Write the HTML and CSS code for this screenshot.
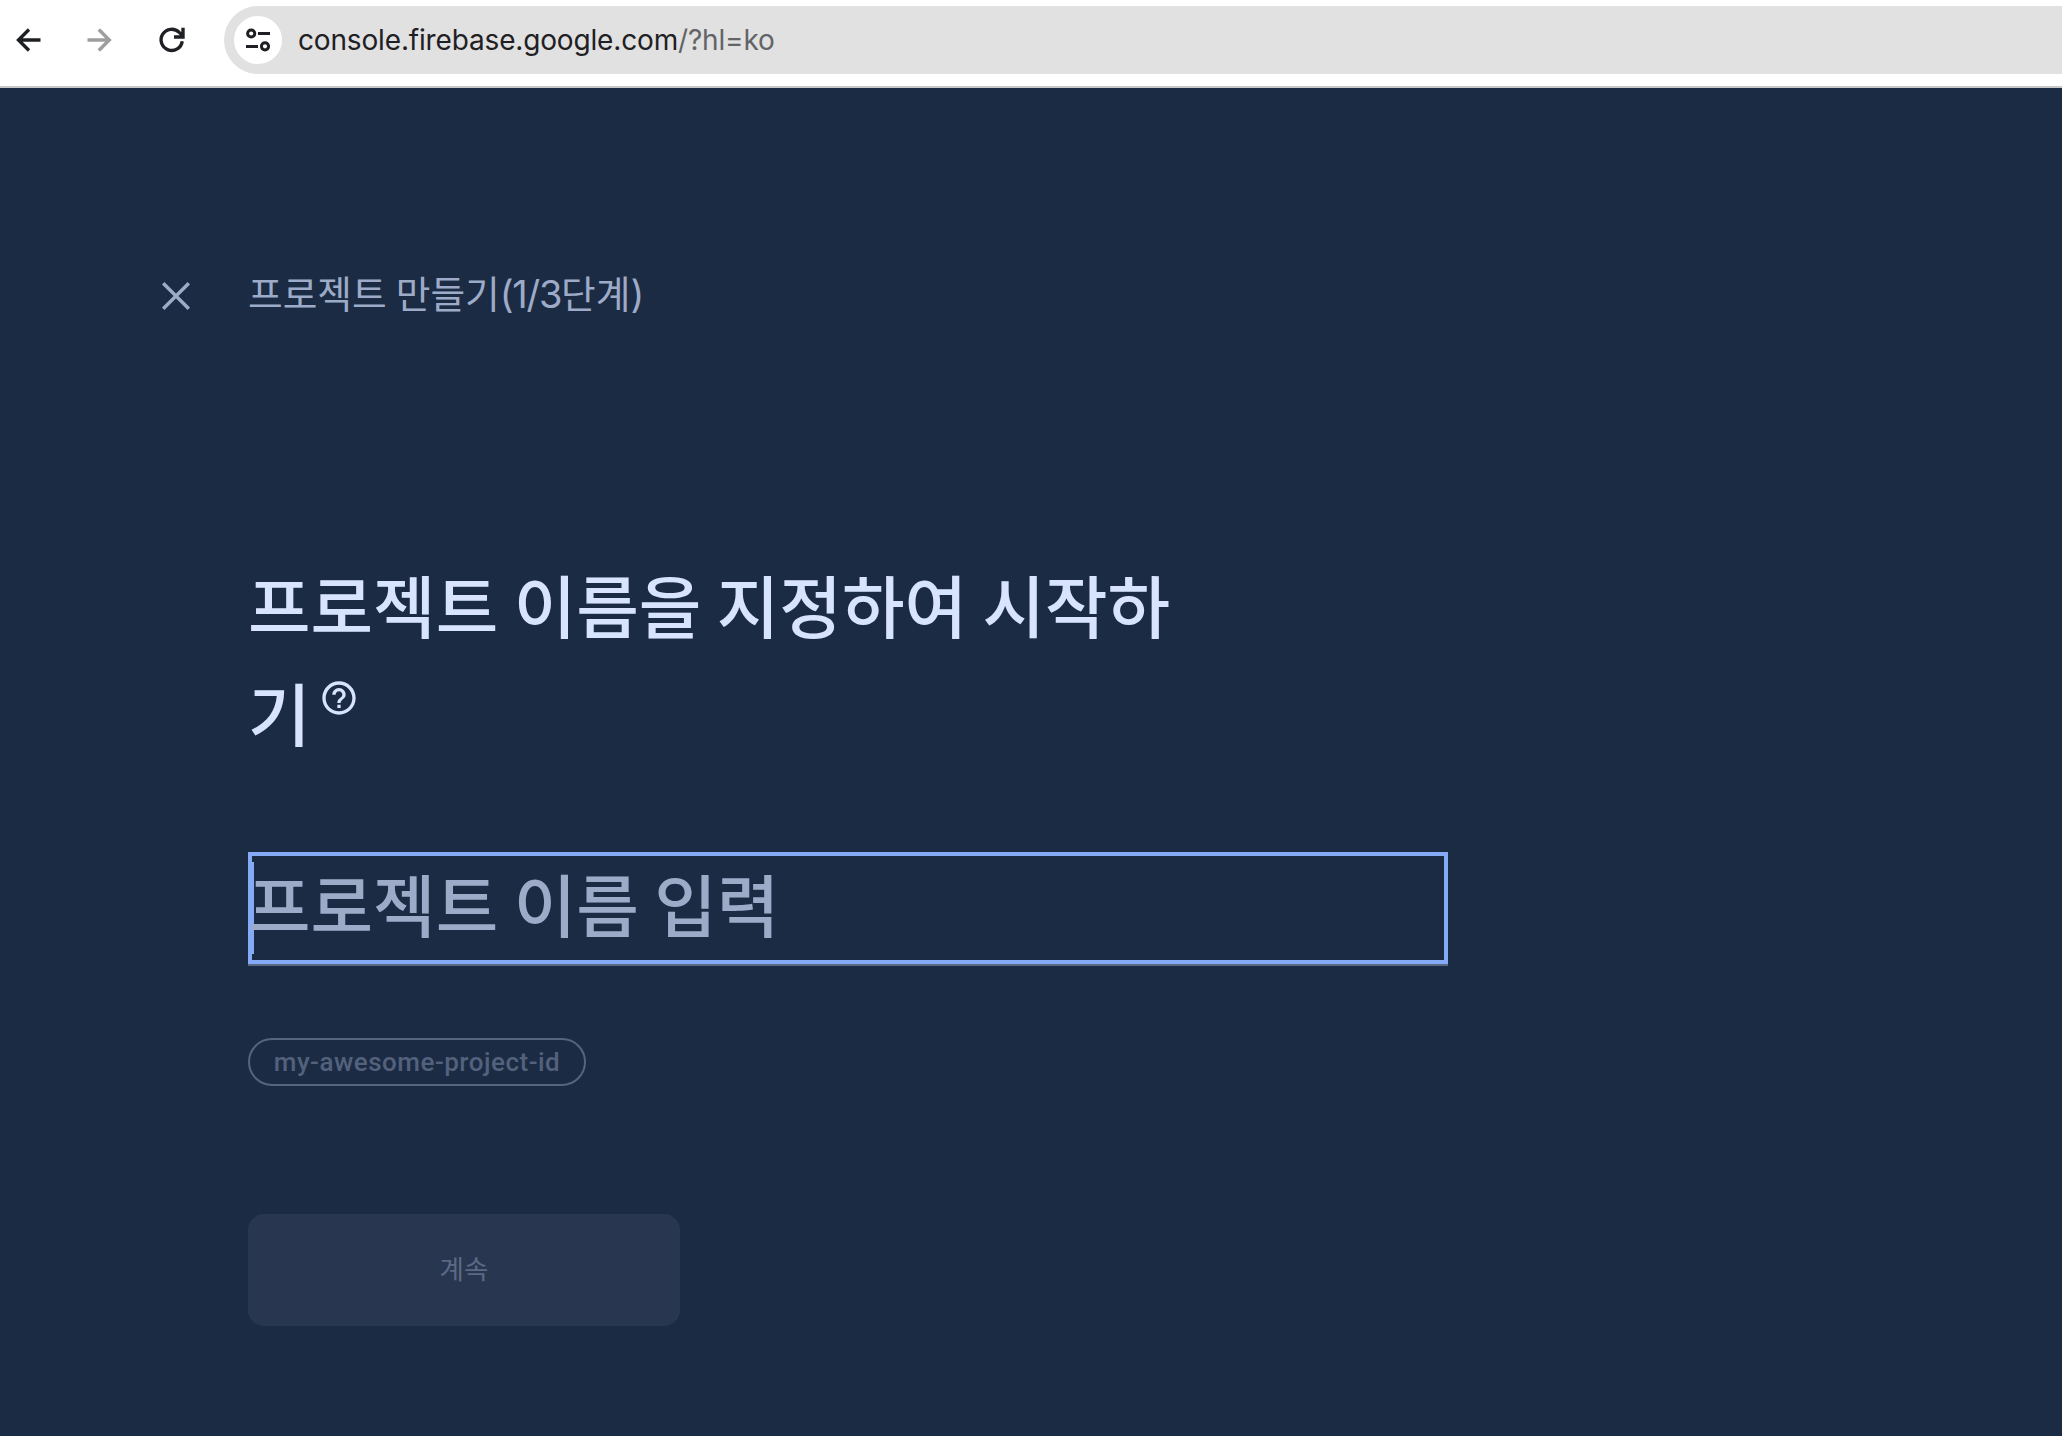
FILE: index.html
```html
<!DOCTYPE html>
<html lang="ko">
<head>
<meta charset="utf-8">
<title>Firebase console</title>
<link rel="stylesheet" href="styles.css">
</head>
<body>
<header class="toolbar">
  <nav class="nav">
    <svg class="nav-icon" viewBox="0 0 28 28"><path d="M26.500 14H5M15 3.500L4.500 14l10.500 10.500"/></svg>
    <svg class="nav-icon nav-disabled" viewBox="0 0 28 28"><path d="M1.500 14h21.500M12.800 3.500L23.300 14 12.800 24.500"/></svg>
    <svg class="nav-icon" viewBox="0 0 28 28"><path d="M24.200 15.200A10.600 10.600 0 1 1 21.200 6.400L24.500 9.500M25 1.800V11H16"/></svg>
  </nav>
  <div class="omnibox">
    <span class="site-info">
      <svg viewBox="0 0 28 28" width="28" height="28"><circle cx="7.200" cy="7.500" r="3.600"/><path d="M14 7.500h12M2 20.500h12"/><circle cx="21" cy="20.300" r="3.600"/></svg>
    </span>
    <span class="url">console.firebase.google.com<span class="url-path">/?hl=ko</span></span>
  </div>
</header>
<main class="page">
  <div class="step">
    <svg class="close" viewBox="0 0 32 32"><path d="M3.200 3.200l25.600 25.600M28.800 3.200L3.200 28.800"/></svg>
    <span class="step-label">프로젝트 만들기<span class="latin">(1/3</span>단계<span class="latin">)</span></span>
  </div>
  <div class="form">
    <h1 class="title">프로젝트 이름을 지정하여 시작하<br>기<svg class="help" viewBox="0 0 24 24"><path d="M11 18h2v-2h-2v2zm1-16C6.480 2 2 6.480 2 12s4.480 10 10 10 10-4.480 10-10S17.520 2 12 2zm0 18c-4.410 0-8-3.590-8-8s3.590-8 8-8 8 3.590 8 8-3.590 8-8 8zm0-14c-2.210 0-4 1.790-4 4h2c0-1.100.9-2 2-2s2 .9 2 2c0 2-3 1.750-3 5h2c0-2.250 3-2.500 3-5 0-2.210-1.790-4-4-4z"/></svg></h1>
    <div class="field"><span class="caret"></span><span class="placeholder">프로젝트 이름 입력</span></div>
    <div class="chip">my-awesome-project-id</div>
    <button class="continue" disabled>계속</button>
  </div>
</main>
</body>
</html>
```
FILE: styles.css
```css
* { box-sizing: border-box; }
body {
  margin: 0;
  height: 1436px;
  overflow: hidden;
  background: #1b2b43;
  font-family: "Noto Sans CJK KR", sans-serif;
}
.toolbar {
  display: flex;
  height: 88px;
  padding-top: 6px;
  background: #fff;
  border-bottom: 2px solid #c7c8c9;
}
.nav {
  display: flex;
  align-items: center;
  gap: 44px;
  width: 224px;
  height: 68px;
  padding-left: 14px;
}
.nav-icon {
  flex: none;
  width: 28px;
  height: 28px;
  fill: none;
  stroke: #1f2023;
  stroke-width: 3.4;
}
.nav-disabled { stroke: #9e9e9e; }
.omnibox {
  display: flex;
  flex: 1;
  align-items: center;
  gap: 16px;
  height: 68px;
  padding-left: 10px;
  background: #e1e1e1;
  border-radius: 34px 0 0 34px;
}
.site-info {
  display: grid;
  place-items: center;
  width: 48px;
  height: 48px;
  border-radius: 50%;
  background: #fff;
}
.site-info svg { fill: none; stroke: #1f2023; stroke-width: 3; }
.url {
  font: 400 28px/40px Inter, sans-serif;
  letter-spacing: -0.16px;
  color: #1f2023;
  white-space: nowrap;
}
.url-path { color: #636467; }
.page { padding: 176px 0 0 160px; }
.step {
  display: flex;
  align-items: center;
  gap: 56px;
  height: 64px;
  color: #9eabc8;
}
.close {
  width: 32px;
  height: 32px;
  fill: none;
  stroke: #9eabc8;
  stroke-width: 3.4;
}
.step-label {
  padding-bottom: 8px;
  font-size: 37.7px;
  line-height: 56px;
  word-spacing: -1.5px;
  white-space: nowrap;
}
.latin {
  font-family: Inter, sans-serif;
  font-size: 38px;
  line-height: 1;
  letter-spacing: -1.3px;
}
.form { width: 1200px; margin: 222px 0 0 88px; }
.title {
  margin: 0;
  font-size: 68px;
  font-weight: 500;
  line-height: 108px;
  word-spacing: -3.6px;
  color: #d8e3fd;
  white-space: nowrap;
}
.help {
  width: 40px;
  height: 40px;
  margin-left: 8px;
  vertical-align: 23px;
  fill: #d8e3fd;
}
.field {
  display: flex;
  align-items: center;
  height: 112px;
  margin-top: 86px;
  border: 4px solid #85aaf6;
  box-shadow: 0 2px #5b6984;
}
.caret { width: 2px; height: 92px; background: #85aaf6; }
.placeholder {
  margin-left: -6px;
  padding-bottom: 10px;
  font-size: 68px;
  font-weight: 500;
  line-height: 90px;
  word-spacing: -3.6px;
  color: #9eabc8;
  white-space: nowrap;
}
.chip {
  width: 338px;
  height: 48px;
  margin-top: 74px;
  border: 2px solid #55647f;
  border-radius: 24px;
  font: 500 26px/44px Roboto, sans-serif;
  letter-spacing: 0.5px;
  text-align: center;
  color: #53617d;
}
.continue {
  display: block;
  width: 432px;
  height: 112px;
  margin-top: 128px;
  padding: 0 0 5px;
  border: 0;
  border-radius: 16px;
  background: #29364f;
  font: 400 26.500px/107px "Noto Sans CJK KR", sans-serif;
  color: #5c6985;
}
```
